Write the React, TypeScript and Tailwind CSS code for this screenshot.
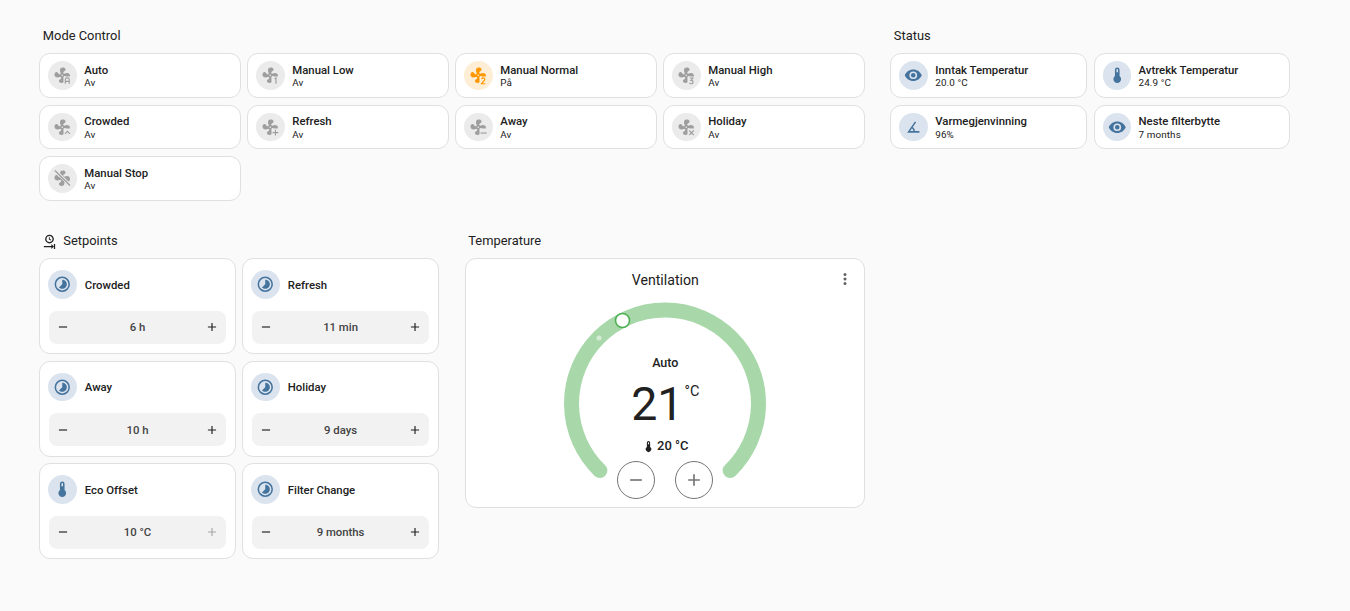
import React from "react";

const FAN =
  "M12,11A1,1 0 0,0 11,12A1,1 0 0,0 12,13A1,1 0 0,0 13,12A1,1 0 0,0 12,11M12.5,2C17,2 17.11,5.57 14.75,6.75C13.76,7.24 13.32,8.29 13.13,9.22C13.61,9.42 14.03,9.73 14.35,10.13C18.05,8.13 22.03,8.92 22.03,12.5C22.03,17 18.46,17.1 17.28,14.73C16.78,13.74 15.72,13.3 14.79,13.11C14.59,13.59 14.28,14 13.88,14.34C15.87,18.03 15.08,22 11.5,22C7,22 6.91,18.42 9.27,17.24C10.25,16.75 10.69,15.71 10.89,14.79C10.4,14.59 9.97,14.27 9.65,13.87C5.96,15.85 2,15.07 2,11.5C2,7 5.56,6.89 6.74,9.26C7.24,10.25 8.29,10.68 9.22,10.87C9.41,10.39 9.73,9.97 10.14,9.65C8.15,5.96 8.94,2 12.5,2Z";
const THERMO = "M15 13V5A3 3 0 0 0 9 5V13A5 5 0 1 0 15 13M12 4A1 1 0 0 1 13 5V8H11V5A1 1 0 0 1 12 4Z";
const EYE =
  "M12,9A3,3 0 0,0 9,12A3,3 0 0,0 12,15A3,3 0 0,0 15,12A3,3 0 0,0 12,9M12,17A5,5 0 0,1 7,12A5,5 0 0,1 12,7A5,5 0 0,1 17,12A5,5 0 0,1 12,17M12,4.5C7,4.5 2.73,7.61 1,12C2.73,16.39 7,19.5 12,19.5C17,19.5 21.27,16.39 23,12C21.27,7.61 17,4.5 12,4.5Z";
const ANGLE =
  "M20,19H4.09L14.18,4.43L15.82,5.57L11.28,12.13C12.89,12.96 14,14.62 14,16.54C14,16.7 14,16.85 13.97,17H20V19M7.91,17H11.96C12,16.85 12,16.7 12,16.54C12,15.28 11.24,14.22 10.14,13.78L7.91,17Z";
const TIMELAPSE =
  "M16.24,7.76C15.07,6.59 13.54,6 12,6V12L7.76,16.24C10.1,18.58 13.9,18.58 16.25,16.24C18.59,13.9 18.59,10.1 16.24,7.76M12,2A10,10 0 0,0 2,12A10,10 0 0,0 12,22A10,10 0 0,0 22,12A10,10 0 0,0 12,2M12,20A8,8 0 0,1 4,12A8,8 0 0,1 12,4A8,8 0 0,1 20,12A8,8 0 0,1 12,20Z";
const CLOCK_END =
  "M12,1C8.14,1 5,4.14 5,8A7,7 0 0,0 12,15C15.86,15 19,11.87 19,8C19,4.14 15.86,1 12,1M12,3.15C14.67,3.15 16.85,5.32 16.85,8C16.85,10.68 14.67,12.85 12,12.85A4.85,4.85 0 0,1 7.15,8A4.85,4.85 0 0,1 12,3.15M11,5V8.69L14.19,10.53L14.94,9.23L12.5,7.82V5M15,16V19H3V21H15V24L19,20M19,20V24H21V16H19";
const DOTS =
  "M12,16A2,2 0 0,1 14,18A2,2 0 0,1 12,20A2,2 0 0,1 10,18A2,2 0 0,1 12,16M12,10A2,2 0 0,1 14,12A2,2 0 0,1 12,14A2,2 0 0,1 10,12A2,2 0 0,1 12,10M12,4A2,2 0 0,1 14,6A2,2 0 0,1 12,8A2,2 0 0,1 10,6A2,2 0 0,1 12,4Z";

const BADGES: Record<string, string> = {
  auto: "M16 23V17.2Q16 15.5 18.5 15.5T21 17.2V23M16 20H21",
  one: "M17.5 16.6L19.4 15.5V23",
  two: "M16.3 16.8Q17 15.3 18.6 15.4Q20.6 15.6 20.4 17.4Q20.3 18.5 16.3 23H21",
  three: "M16.4 15.6H20.6L18 18.6Q21 18.6 20.8 20.8Q20.4 23.2 18.2 23Q16.8 23 16.2 21.8",
  up: "M15.5 20.5L18.75 17.2L22 20.5",
  plus: "M18.75 15.2V22.8M15 19H22.5",
  minus: "M15 19.5H23",
  x: "M15.8 16.2L21.8 22.2M21.8 16.2L15.8 22.2",
};

function FanIcon({ badge, off, className }: { badge?: string; off?: boolean; className: string }) {
  const id = "m" + (badge ?? "off");
  return (
    <svg viewBox="0 0 24 24" className={className} fill="currentColor">
      {badge ? (
        <>
          <mask id={id}>
            <rect width="24" height="24" fill="white" />
            <rect x="13.6" y="13.6" width="11" height="11" fill="black" />
          </mask>
          <path d={FAN} mask={`url(#${id})`} />
          <path d={BADGES[badge]} fill="none" stroke="currentColor" strokeWidth="1.5" />
        </>
      ) : (
        <>
          <mask id={id}>
            <rect width="24" height="24" fill="white" />
            <path d="M2 1L23 22" stroke="black" strokeWidth="3.8" />
          </mask>
          <path d={FAN} mask={`url(#${id})`} />
          <path d="M2.5 2L22 21.5" stroke="currentColor" strokeWidth="1.7" />
        </>
      )}
    </svg>
  );
}

function MdiIcon({ d, className }: { d: string; className: string }) {
  return (
    <svg viewBox="0 0 24 24" className={className} fill="currentColor">
      <path d={d} />
    </svg>
  );
}

function Card({ className, children }: { className: string; children: React.ReactNode }) {
  return <div className={`rounded-[11px] border border-[#e0e0e0] bg-white ${className}`}>{children}</div>;
}

function Tile({
  name,
  state,
  icon,
  tone,
}: {
  name: string;
  state: string;
  icon: React.ReactNode;
  tone: "off" | "on" | "blue";
}) {
  const circle =
    tone === "on"
      ? "bg-[#feeed6] text-[#ff9800]"
      : tone === "blue"
        ? "bg-[#dbe4ee] text-[#44739e]"
        : "bg-[#ebebeb] text-[#9e9e9e]";
  return (
    <Card className="flex h-[44.8px] items-center gap-[7.5px] pl-[8px]">
      <div className={`flex size-[28.5px] shrink-0 items-center justify-center rounded-full ${circle}`}>{icon}</div>
      <div className="min-w-0 pt-[2.5px]">
        <div className="text-[11.35px] leading-[13.5px] font-medium text-[#212121]">{name}</div>
        <div className="text-[9.9px] leading-[12.5px] tracking-[0.1px] text-[#212121]">{state}</div>
      </div>
    </Card>
  );
}

function Setpoint({
  name,
  value,
  d,
  disabledPlus,
}: {
  name: string;
  value: string;
  d: string;
  disabledPlus?: boolean;
}) {
  return (
    <Card className="flex h-[96px] flex-col px-[8.5px] pt-[11px]">
      <div className="-ml-[0.5px] flex items-center gap-[8px]">
        <div className="flex size-[28.5px] shrink-0 items-center justify-center rounded-full bg-[#dbe4ee] text-[#44739e]">
          <MdiIcon d={d} className="size-[18.5px]" />
        </div>
        <div className="pt-[2px] text-[11.35px] font-medium text-[#212121]">{name}</div>
      </div>
      <div className="mt-[12px] flex h-[33px] items-center justify-between rounded-[8px] bg-[#f2f2f2] px-[7px]">
        <MinusPlus kind="minus" className="size-[14px] text-[#212121]" />
        <div className="pt-[1.5px] text-[11.35px] font-medium text-[#424242]">{value}</div>
        <MinusPlus kind="plus" className={`size-[14px] ${disabledPlus ? "text-[#a8a8a8]" : "text-[#212121]"}`} />
      </div>
    </Card>
  );
}

function MinusPlus({ kind, className }: { kind: "minus" | "plus"; className: string }) {
  return (
    <svg viewBox="0 0 24 24" className={className} fill="currentColor">
      <path d={kind === "minus" ? "M19,13H5V11H19V13Z" : "M19,13H13V19H11V13H5V11H11V5H13V11H19V13Z"} />
    </svg>
  );
}

const titleCls = "text-[12.9px] leading-[20px] text-[#212121]";

function Dial() {
  return (
    <svg viewBox="0 0 400 250" className="absolute top-[-1px] left-[-1px] h-[250px] w-[400px]">
      <path
        d="M134.9 212.6A93.5 93.5 0 1 1 265.1 212.6"
        fill="none"
        stroke="#a8d8a9"
        strokeWidth="15"
        strokeLinecap="round"
      />
      <circle cx="134" cy="80" r="2.5" fill="#d4ecd5" />
      <circle cx="157.5" cy="62.5" r="7" fill="white" stroke="#4caf50" strokeWidth="1.6" />
    </svg>
  );
}

export default function App() {
  const bd = "size-[18.5px]";
  const modes: [string, string, React.ReactNode, "off" | "on"][] = [
    ["Auto", "Av", <FanIcon badge="auto" className={bd} />, "off"],
    ["Manual Low", "Av", <FanIcon badge="one" className={bd} />, "off"],
    ["Manual Normal", "På", <FanIcon badge="two" className={bd} />, "on"],
    ["Manual High", "Av", <FanIcon badge="three" className={bd} />, "off"],
    ["Crowded", "Av", <FanIcon badge="up" className={bd} />, "off"],
    ["Refresh", "Av", <FanIcon badge="plus" className={bd} />, "off"],
    ["Away", "Av", <FanIcon badge="minus" className={bd} />, "off"],
    ["Holiday", "Av", <FanIcon badge="x" className={bd} />, "off"],
    ["Manual Stop", "Av", <FanIcon off className={bd} />, "off"],
  ];
  const status: [string, string, string][] = [
    ["Inntak Temperatur", "20.0 °C", EYE],
    ["Avtrekk Temperatur", "24.9 °C", THERMO],
    ["Varmegjenvinning", "96%", ANGLE],
    ["Neste filterbytte", "7 months", EYE],
  ];
  const setpoints: [string, string, string, boolean?][] = [
    ["Crowded", "6 h", TIMELAPSE],
    ["Refresh", "11 min", TIMELAPSE],
    ["Away", "10 h", TIMELAPSE],
    ["Holiday", "9 days", TIMELAPSE],
    ["Eco Offset", "10 °C", THERMO, true],
    ["Filter Change", "9 months", TIMELAPSE],
  ];

  return (
    <div className="min-h-[611px] bg-[#fafafa] pt-[26.3px] pl-[39.3px] [font-family:Roboto,sans-serif]">
      <div className="flex gap-[25px]">
        <section className="w-[826px]">
          <h2 className={`${titleCls} mb-[7px] pl-[3.5px]`}>Mode Control</h2>
          <div className="grid grid-cols-4 gap-x-[6px] gap-y-[6.5px]">
            {modes.map(([n, s, i, t]) => (
              <Tile key={n} name={n} state={s} icon={i} tone={t} />
            ))}
          </div>
        </section>
        <section className="w-[400px]">
          <h2 className={`${titleCls} mb-[7px] pl-[3.5px]`}>Status</h2>
          <div className="grid grid-cols-2 gap-x-[6.5px] gap-y-[6.5px]">
            {status.map(([n, s, d]) => (
              <Tile key={n} name={n} state={s} tone="blue" icon={<MdiIcon d={d} className="size-[18.5px]" />} />
            ))}
          </div>
        </section>
      </div>

      <div className="mt-[30.5px] flex gap-[26px]">
        <section className="w-[400px]">
          <h2 className={`${titleCls} mb-[7px] flex items-center gap-[6px] pl-[3px]`}>
            <MdiIcon d={CLOCK_END} className="size-[15px] text-[#212121]" />
            Setpoints
          </h2>
          <div className="grid w-[399.5px] grid-cols-2 gap-x-[6.5px] gap-y-[6.5px]">
            {setpoints.map(([n, v, d, dis]) => (
              <Setpoint key={n} name={n} value={v} d={d} disabledPlus={dis} />
            ))}
          </div>
        </section>
        <section className="w-[400px]">
          <h2 className={`${titleCls} mb-[7px] pl-[3px]`}>Temperature</h2>
          <Card className="relative flex h-[250px] flex-col items-center">
            <Dial />
            <div className="relative mt-[11px] text-[14.1px] leading-[20px] text-[#212121]">Ventilation</div>
            <MdiIcon d={DOTS} className="absolute top-[11px] right-[10.5px] size-[18px] text-[#616161]" />
            <div className="relative mt-[65px] text-[12.5px] leading-[16px] font-medium text-[#212121]">Auto</div>
            <div className="relative mt-[9px] flex h-[48px] items-start">
              <span className="text-[46.5px] leading-[48px] font-[375] text-[#212121]">21</span>
              <span className="mt-[3px] ml-[1px] text-[14.5px] leading-[18px] text-[#212121]">°C</span>
            </div>
            <div className="relative mt-[9px] flex items-center gap-[2px] text-[13px] leading-[18px] font-medium text-[#212121]">
              <MdiIcon d={THERMO} className="size-[13px]" />
              20 °C
            </div>
            <div className="relative mt-[6px] flex gap-[20px]">
              <button className="flex size-[38px] items-center justify-center rounded-full border border-[#757575] bg-white text-[#757575]">
                <MinusPlus kind="minus" className="size-[20px]" />
              </button>
              <button className="flex size-[38px] items-center justify-center rounded-full border border-[#757575] bg-white text-[#757575]">
                <MinusPlus kind="plus" className="size-[20px]" />
              </button>
            </div>
          </Card>
        </section>
      </div>
    </div>
  );
}
